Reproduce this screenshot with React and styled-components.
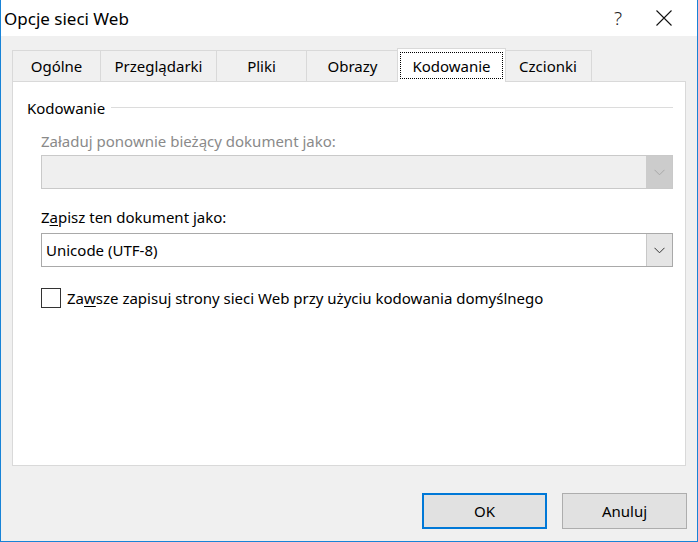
import React from "react";
import styled, { createGlobalStyle, css } from "styled-components";

const Global = createGlobalStyle`
  html, body { margin: 0; padding: 0; background: #ffffff; }
  * { box-sizing: border-box; }
`;

const FONT = `"Noto Sans", "Open Sans", Arial, sans-serif`;

const Window = styled.div`
  width: 698px;
  height: 542px;
  display: flex;
  flex-direction: column;
  background: #f0f0f0;
  border-left: 1px solid #1883d7;
  border-right: 1px solid #1883d7;
  border-bottom: 1px solid #1883d7;
  font-family: ${FONT};
  font-size: 15px;
  color: #000;
`;

const TitleBar = styled.div`
  height: 36px;
  flex: none;
  display: flex;
  align-items: center;
  background: #ffffff;
  padding-left: 3px;
`;

const Title = styled.div`
  flex: 1;
  font-size: 17px;
  line-height: 24px;
  padding-top: 1px;
`;

const CaptionButton = styled.div`
  width: ${(p) => p.$w}px;
  height: 36px;
  display: flex;
  align-items: center;
  justify-content: center;
  font-size: 19px;
  font-weight: 300;
  color: #222;
`;

const Body = styled.div`
  flex: 1;
  display: flex;
  flex-direction: column;
  padding: 12px 11px 0 11px;
`;

const TabStrip = styled.div`
  height: 34px;
  display: flex;
  align-items: flex-end;
  margin-bottom: -1px;
  position: relative;
  z-index: 1;
`;

const Tab = styled.div`
  width: ${(p) => p.$w}px;
  height: 31px;
  margin-bottom: 1px;
  margin-left: -1px;
  border: 1px solid #d9d9d9;
  border-bottom: none;
  background: #f0f0f0;
  display: flex;
  align-items: center;
  justify-content: center;
  white-space: nowrap;
  &:first-child { margin-left: 0; }
  ${(p) =>
    p.$active &&
    css`
      height: 34px;
      margin-bottom: 0;
      margin-left: -2px;
      margin-right: -1px;
      background: #ffffff;
      position: relative;
      z-index: 2;
      padding: 3px 2px 3px 2px;
    `}
`;

const FocusRect = styled.div`
  width: 100%;
  height: 100%;
  outline: 1px dotted #000;
  outline-offset: -1px;
  display: flex;
  align-items: center;
  justify-content: center;
`;

const Panel = styled.div`
  height: 385px;
  background: #ffffff;
  border: 1px solid #d9d9d9;
  padding: 16px 12px 0 14px;
  display: flex;
  flex-direction: column;
`;

const GroupHeader = styled.div`
  display: flex;
  align-items: center;
  height: 20px;
  line-height: 20px;
`;

const GroupLine = styled.div`
  flex: 1;
  height: 1px;
  margin-left: 6px;
  margin-top: -1px;
  background: #dcdcdc;
`;

const GroupContent = styled.div`
  padding-left: 14px;
  display: flex;
  flex-direction: column;
`;

const Label = styled.div`
  line-height: 20px;
  margin-top: ${(p) => p.$mt}px;
  color: ${(p) => (p.$disabled ? "#8a8a8a" : "#000")};
  u { text-underline-offset: 2px; }
`;

const Combo = styled.div`
  height: 34px;
  margin-top: ${(p) => p.$mt}px;
  display: flex;
  border: 1px solid ${(p) => (p.$disabled ? "#c9c9c9" : "#a9a9a9")};
  background: ${(p) => (p.$disabled ? "#efefef" : "#ffffff")};
`;

const ComboText = styled.div`
  flex: 1;
  display: flex;
  align-items: center;
  padding-left: 4px;
`;

const ComboButton = styled.div`
  width: 26px;
  display: flex;
  align-items: center;
  justify-content: center;
  background: ${(p) => (p.$disabled ? "#cccccc" : "#e5e5e5")};
  border-left: 1px solid ${(p) => (p.$disabled ? "#cccccc" : "#c8c8c8")};
  color: ${(p) => (p.$disabled ? "#a8a8a8" : "#333")};
`;

const CheckRow = styled.label`
  margin-top: 21px;
  display: flex;
  align-items: center;
  gap: 6px;
  line-height: 20px;
  u { text-underline-offset: 2px; }
`;

const CheckBox = styled.span`
  width: 20px;
  height: 20px;
  border: 1px solid #333333;
  background: #ffffff;
  flex: none;
`;

const Footer = styled.div`
  display: flex;
  justify-content: flex-end;
  gap: 15px;
  padding-top: 27px;
  margin-right: -1px;
`;

const Button = styled.div`
  width: 125px;
  height: 36px;
  display: flex;
  align-items: center;
  justify-content: center;
  background: #e1e1e1;
  border: ${(p) => (p.$default ? "2px solid #0078d7" : "1px solid #adadad")};
`;

const Chevron = () => (
  <svg width="11" height="7" viewBox="0 0 11 7" fill="none">
    <path d="M0.5 0.8 L5.5 5.8 L10.5 0.8" stroke="currentColor" strokeWidth="1" />
  </svg>
);

const CloseIcon = () => (
  <svg width="16" height="16" viewBox="0 0 16 16" fill="none">
    <path d="M0.5 0.5 L15.5 15.5 M15.5 0.5 L0.5 15.5" stroke="#111" strokeWidth="1.1" />
  </svg>
);

const tabs = [
  { label: "Ogólne", w: 89 },
  { label: "Przeglądarki", w: 117 },
  { label: "Pliki", w: 91 },
  { label: "Obrazy", w: 93 },
  { label: "Kodowanie", w: 109, active: true },
  { label: "Czcionki", w: 88 },
];

export default function App() {
  return (
    <>
      <Global />
      <Window>
        <TitleBar>
          <Title>Opcje sieci Web</Title>
          <CaptionButton $w={46}>?</CaptionButton>
          <CaptionButton $w={46} style={{ marginRight: 10 }}>
            <CloseIcon />
          </CaptionButton>
        </TitleBar>
        <Body>
          <TabStrip>
            {tabs.map((t) => (
              <Tab key={t.label} $w={t.w} $active={t.active}>
                {t.active ? <FocusRect>{t.label}</FocusRect> : t.label}
              </Tab>
            ))}
          </TabStrip>
          <Panel>
            <GroupHeader>
              Kodowanie
              <GroupLine />
            </GroupHeader>
            <GroupContent>
              <Label $mt={13} $disabled>
                Załaduj ponownie bieżący dokument jako:
              </Label>
              <Combo $mt={4} $disabled>
                <ComboText />
                <ComboButton $disabled>
                  <Chevron />
                </ComboButton>
              </Combo>
              <Label $mt={18}>
                Z<u>a</u>pisz ten dokument jako:
              </Label>
              <Combo $mt={6}>
                <ComboText>Unicode (UTF-8)</ComboText>
                <ComboButton>
                  <Chevron />
                </ComboButton>
              </Combo>
              <CheckRow>
                <CheckBox />
                <span>
                  Za<u>w</u>sze zapisuj strony sieci Web przy użyciu kodowania domyślnego
                </span>
              </CheckRow>
            </GroupContent>
          </Panel>
          <Footer>
            <Button $default>OK</Button>
            <Button>Anuluj</Button>
          </Footer>
        </Body>
      </Window>
    </>
  );
}
